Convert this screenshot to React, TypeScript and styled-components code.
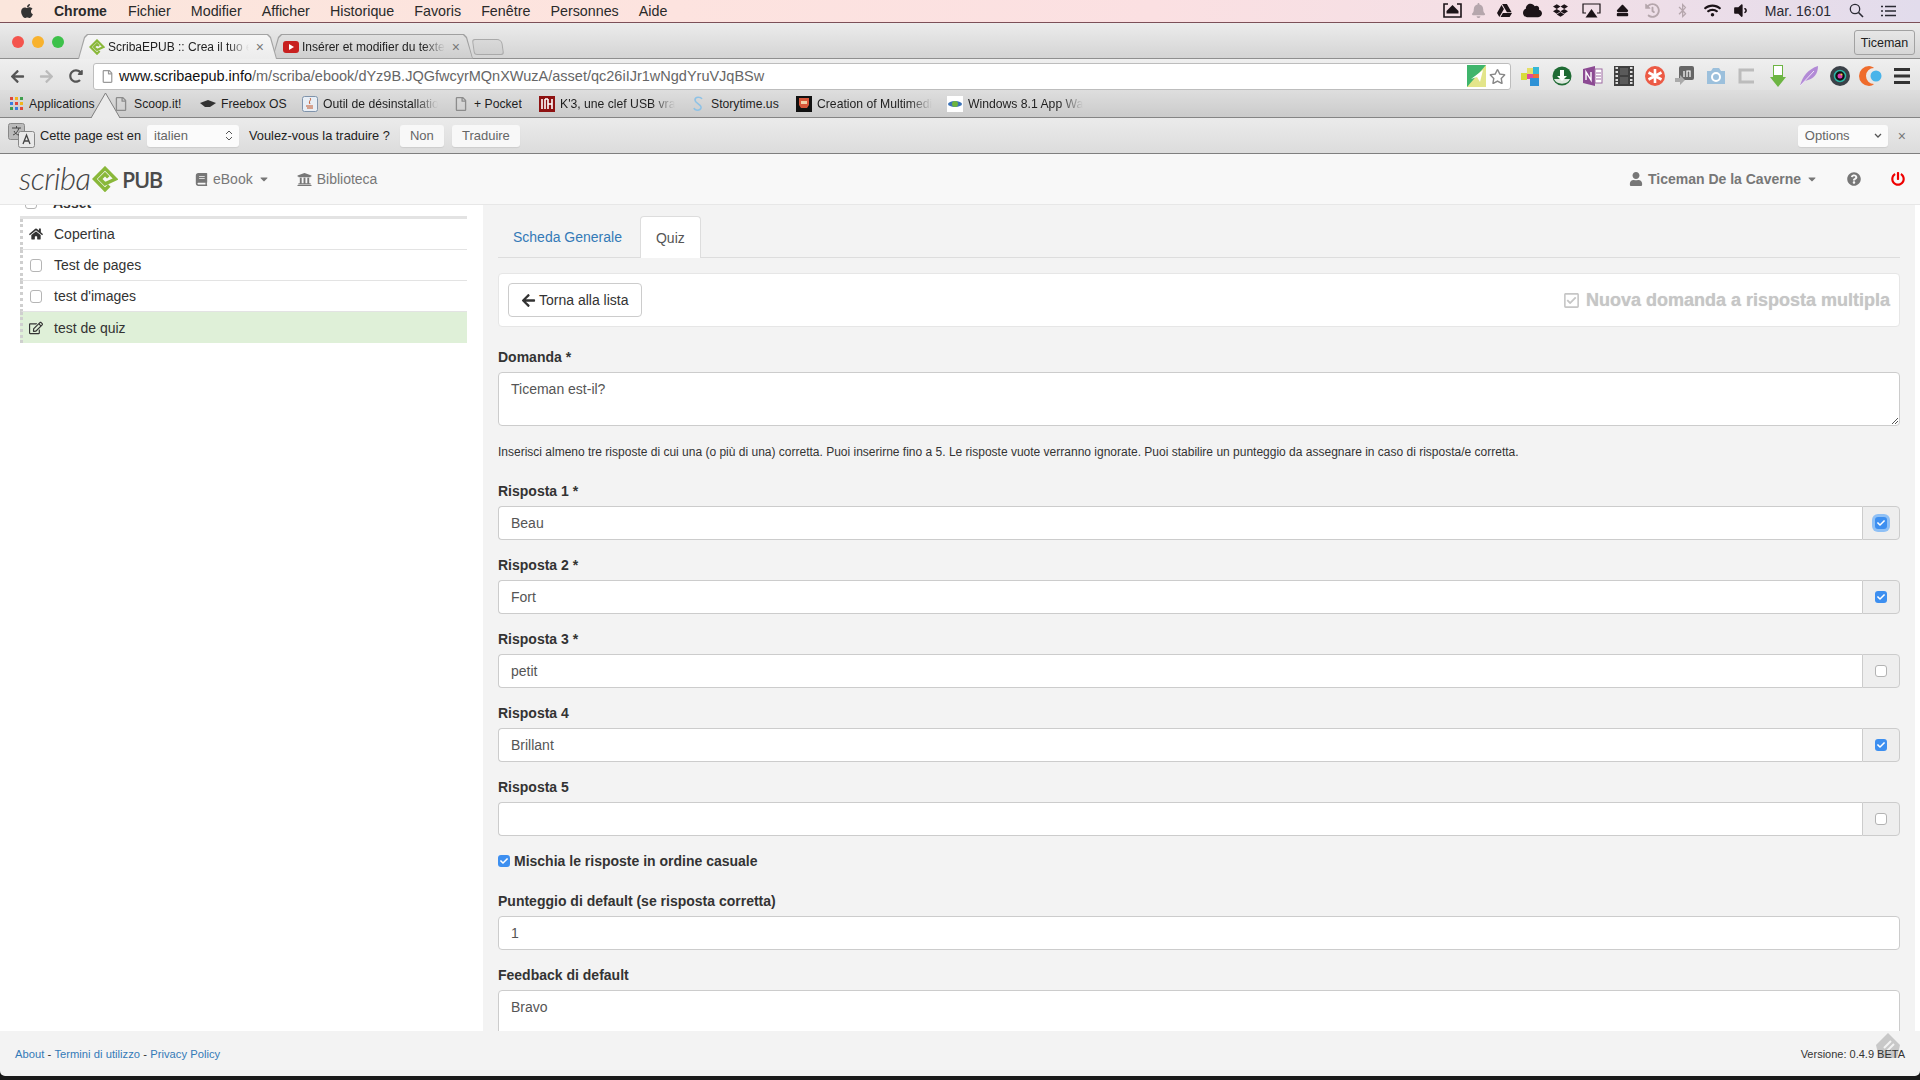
import React from "react";
import styled, { createGlobalStyle } from "styled-components";
import {
  FaApple,
  FaArrowLeft,
  FaArrowRight,
  FaBell,
  FaBluetoothB,
  FaBook,
  FaCaretDown,
  FaCheck,
  FaCloud,
  FaDropbox,
  FaEject,
  FaGoogleDrive,
  FaHistory,
  FaHome,
  FaPowerOff,
  FaQuestionCircle,
  FaRedoAlt,
  FaRegCheckSquare,
  FaRegEdit,
  FaRegFile,
  FaRegStar,
  FaUniversity,
  FaUser,
  FaVolumeDown,
  FaWifi,
} from "react-icons/fa";

const GlobalStyle = createGlobalStyle`
  * { box-sizing: border-box; }
  html, body { margin: 0; padding: 0; height: 100%; overflow: hidden; }
  body {
    font-family: "Liberation Sans", Arial, sans-serif;
    font-size: 14px;
    color: #333;
    background: #141414;
  }
`;

const Page = styled.div`
  width: 1920px;
  height: 1080px;
  display: flex;
  flex-direction: column;
  overflow: hidden;
`;

/* mac menu bar */
const MenuBar = styled.div`
  height: 23px;
  flex: none;
  display: flex;
  align-items: center;
  padding: 0 24px 1px 19px;
  background: linear-gradient(90deg, #fbe6dc 0%, #fde3df 35%, #fbe0e2 60%, #f3dfe6 80%, #e2dcec 100%);
  border-bottom: 1px solid #7c5058;
  color: #2a2a2a;
`;
const AppleSlot = styled.div`
  width: 35px;
  display: flex;
  font-size: 16px;
  color: #333;
`;
const MenuItem = styled.span<{ $bold?: boolean }>`
  font-size: ${(p) => (p.$bold ? "14px" : "14.3px")};
  margin-right: ${(p) => (p.$bold ? "21px" : "20px")};
  font-weight: ${(p) => (p.$bold ? 700 : 400)};
`;
const MenuRight = styled.div`
  margin-left: auto;
  display: flex;
  align-items: center;
`;
const StatusSlot = styled.div<{ $dim?: boolean; $w: number }>`
  width: ${(p) => p.$w}px;
  display: flex;
  justify-content: center;
  align-items: center;
  font-size: 15px;
  color: ${(p) => (p.$dim ? "#b5a6ac" : "#1c1418")};
`;
const Clock = styled.span`
  font-size: 14px;
  margin: 0 18px 0 12px;
  white-space: nowrap;
  color: #2a2a33;
`;
const MenuGlyph = styled.svg`
  flex: none;
  margin-right: 17px;
  &:last-child { margin-right: 0; }
`;

/* chrome */
const TabStrip = styled.div`
  height: 36px;
  flex: none;
  display: flex;
  align-items: flex-end;
  padding: 0 5px 0 0;
  background: linear-gradient(#ececec, #d4d4d4);
  border-bottom: 1px solid #8f8f8f;
`;
const Lights = styled.div`
  width: 78px;
  flex: none;
  display: flex;
  gap: 8px;
  padding: 0 0 10px 12px;
  align-self: flex-end;
`;
const Light = styled.div<{ $c: string }>`
  width: 12px;
  height: 12px;
  border-radius: 50%;
  background: ${(p) => p.$c};
`;
const Tab = styled.div<{ $active?: boolean; $w: number }>`
  position: relative;
  width: ${(p) => p.$w}px;
  height: 25px;
  margin-bottom: -1px;
  margin-right: -5px;
  flex: none;
  display: flex;
  align-items: center;
  padding: 0 13px 0 11px;
  background: ${(p) => (p.$active ? "#a4a4a4" : "#a0a0a0")};
  clip-path: polygon(0 100%, 6px 3px, 9px 0, calc(100% - 9px) 0, calc(100% - 6px) 3px, 100% 100%);
  z-index: ${(p) => (p.$active ? 2 : 1)};
  &::before {
    content: "";
    position: absolute;
    inset: 1px 1px ${(p) => (p.$active ? "0" : "1px")} 1px;
    background: ${(p) => (p.$active ? "linear-gradient(#f6f6f6, #ececec)" : "linear-gradient(#e0e0e0, #cfcfcf)")};
    clip-path: polygon(0 100%, 6px 3px, 9px 0, calc(100% - 9px) 0, calc(100% - 6px) 3px, 100% 100%);
  }
`;
const TabInner = styled.div`
  position: relative;
  display: flex;
  align-items: center;
  width: 100%;
  gap: 3px;
`;
const TabTitle = styled.span`
  flex: 1;
  min-width: 0;
  font-size: 12px;
  color: #222;
  white-space: nowrap;
  overflow: hidden;
  -webkit-mask-image: linear-gradient(90deg, #000 85%, transparent 100%);
  mask-image: linear-gradient(90deg, #000 85%, transparent 100%);
`;
const TabClose = styled.span`
  font-size: 14px;
  color: #777;
  margin-left: 4px;
`;
const NewTab = styled.div`
  width: 30px;
  height: 16px;
  margin: 0 0 3px 5px;
  flex: none;
  border: 1px solid #a9a9a9;
  border-radius: 3px 5px 3px 3px;
  background: linear-gradient(#d9d9d9, #cfcfcf);
  transform: skewX(8deg);
`;
const ProfileBtn = styled.div`
  margin: 0 0 3px auto;
  width: 61px;
  height: 25px;
  display: flex;
  align-items: center;
  justify-content: center;
  font-size: 12.5px;
  color: #222;
  border: 1px solid #a2a2a2;
  border-radius: 3px;
`;

const Toolbar = styled.div`
  height: 31px;
  flex: none;
  display: flex;
  align-items: center;
  padding-top: 3px;
  background: linear-gradient(#efefef, #e2e2e2);
`;
const NavGlyph = styled.div<{ $c: string }>`
  width: 29px;
  display: flex;
  justify-content: center;
  font-size: 15px;
  color: ${(p) => p.$c};
`;
const NavGroup = styled.div`
  width: 93px;
  flex: none;
  display: flex;
  padding-left: 3px;
`;
const UrlBox = styled.div`
  width: 1418px;
  height: 27px;
  flex: none;
  display: flex;
  align-items: center;
  padding: 0 4px 0 7px;
  background: #fff;
  border: 1px solid #bdbdbd;
  border-radius: 3px;
`;
const UrlText = styled.div`
  margin-left: 5px;
  font-size: 14.5px;
  color: #666;
  white-space: nowrap;
  b {
    font-weight: 400;
    color: #111;
  }
`;
const UrlEnd = styled.div`
  margin-left: auto;
  display: flex;
  align-items: center;
  gap: 3px;
  font-size: 17px;
  color: #888;
`;
const Extensions = styled.div`
  flex: 1;
  display: flex;
  align-items: center;
  padding-left: 4.5px;
`;
const Ext = styled.div`
  width: 30.9px;
  display: flex;
  justify-content: center;
`;

const Bookmarks = styled.div`
  position: relative;
  height: 28px;
  flex: none;
  display: flex;
  align-items: center;
  padding-left: 8px;
  background: linear-gradient(#dedede, #cbcbcb);
  border-bottom: 1px solid #858585;
`;
const Bookmark = styled.div<{ $w: number }>`
  width: ${(p) => p.$w}px;
  flex: none;
  display: flex;
  align-items: center;
  gap: 5px;
`;
const BookmarkIcon = styled.div`
  width: 16px;
  height: 16px;
  flex: none;
  display: flex;
  align-items: center;
  justify-content: center;
  font-size: 14px;
  color: #8c8c8c;
`;
const BookmarkText = styled.span<{ $fade?: boolean }>`
  font-size: 12.2px;
  color: #1f1f1f;
  white-space: nowrap;
  overflow: hidden;
  max-width: 115px;
  ${(p) =>
    p.$fade
      ? `-webkit-mask-image: linear-gradient(90deg, #000 80%, transparent 100%);
         mask-image: linear-gradient(90deg, #000 80%, transparent 100%);`
      : ""}
`;
const BubbleArrow = styled.svg`
  position: absolute;
  left: 91px;
  top: 3px;
`;

const TranslateBar = styled.div`
  height: 36px;
  flex: none;
  display: flex;
  align-items: center;
  padding: 0 14px 0 8px;
  font-size: 12.8px;
  color: #222;
  background: linear-gradient(#ebebeb, #dcdcdc);
  border-bottom: 1px solid #7f7f7f;
`;
const TranslateIcon = styled.svg`
  flex: none;
  margin-right: 5px;
`;
const TranslateLabel = styled.span<{ $ml?: number; $mr?: number }>`
  margin-left: ${(p) => p.$ml ?? 0}px;
  margin-right: ${(p) => p.$mr ?? 6}px;
  white-space: nowrap;
`;
const TranslateSelect = styled.div<{ $w: number; $push?: boolean }>`
  width: ${(p) => p.$w}px;
  height: 22px;
  flex: none;
  display: flex;
  align-items: center;
  justify-content: space-between;
  padding: 0 6px 0 7px;
  margin-left: ${(p) => (p.$push ? "auto" : "0")};
  background: #fbfbfb;
  border-radius: 3px;
  color: #666;
  font-size: 13px;
  box-shadow: 0 1px 1px rgba(0, 0, 0, 0.08);
`;
const TranslateBtn = styled.div<{ $w: number; $ml?: number }>`
  width: ${(p) => p.$w}px;
  height: 22px;
  flex: none;
  display: flex;
  align-items: center;
  justify-content: center;
  margin-left: ${(p) => p.$ml ?? 0}px;
  background: #f8f8f8;
  border-radius: 3px;
  color: #666;
  font-size: 13px;
  box-shadow: 0 1px 1px rgba(0, 0, 0, 0.08);
`;
const TranslateClose = styled.span`
  margin-left: 10px;
  color: #777;
  font-size: 14px;
`;

/* app navbar */
const Navbar = styled.div`
  height: 51px;
  flex: none;
  display: flex;
  align-items: center;
  padding: 0 15px 0 19px;
  background: #f8f8f8;
  border-bottom: 1px solid #e7e7e7;
`;
const Logo = styled.div`
  width: 176px;
  flex: none;
  display: flex;
  align-items: center;
`;
const LogoScript = styled.span`
  font-family: "Lato", sans-serif;
  font-style: italic;
  font-weight: 300;
  font-size: 31px;
  line-height: 34px;
  letter-spacing: -0.5px;
  color: #444;
  width: 73px;
  margin-top: -3px;
`;
const LogoPub = styled.span`
  font-family: "Open Sans", sans-serif;
  font-weight: 600;
  font-size: 22px;
  letter-spacing: -1.5px;
  color: #4b4b4b;
  margin-left: 4px;
`;
const NavLink = styled.div<{ $strong?: boolean; $mr?: number }>`
  display: flex;
  align-items: center;
  gap: 5px;
  font-size: 14px;
  color: #777;
  font-weight: ${(p) => (p.$strong ? 700 : 400)};
  margin-right: ${(p) => p.$mr ?? 27}px;
  svg { flex: none; }
`;
const NavRight = styled.div`
  margin-left: auto;
  display: flex;
  align-items: center;
`;
const NavIcon = styled.div<{ $c: string; $mr: number }>`
  display: flex;
  font-size: 14px;
  color: ${(p) => p.$c};
  margin-right: ${(p) => p.$mr}px;
`;

const Main = styled.div`
  height: 826px;
  flex: none;
  display: flex;
  overflow: hidden;
  background: #fff;
`;
const Sidebar = styled.div`
  width: 483px;
  flex: none;
  padding: 0 16px 0 20px;
  background: #fff;
`;
/* list is scrolled: only the foot of the "Asset" head shows under the navbar */
const SideHead = styled.div`
  height: 14px;
  overflow: hidden;
  font-weight: 700;
  border-bottom: 3px solid #e3e3e3;
`;
const SideHeadInner = styled.div`
  display: flex;
  align-items: center;
  gap: 16px;
  height: 21px;
  margin-top: -13px;
  padding-left: 5px;
`;
const SideRow = styled.div<{ $active?: boolean }>`
  height: 31px;
  display: flex;
  align-items: center;
  gap: 11px;
  padding-left: 6px;
  font-size: 14px;
  color: #333;
  border-bottom: ${(p) => (p.$active ? "0" : "1px solid #e3e3e3")};
  border-left: 3px dotted #cfcfcf;
  background: ${(p) => (p.$active ? "#dff0d8" : "#fff")};
`;
const RowIcon = styled.div`
  width: 14px;
  flex: none;
  display: flex;
  justify-content: center;
  font-size: 14px;
  color: #333;
`;
const RoundBox = styled.div`
  width: 12px;
  height: 13px;
  flex: none;
  border: 1px solid #b5b5b5;
  border-radius: 3px;
  background: #fff;
`;

const Content = styled.div`
  flex: 1;
  min-width: 0;
  background: #f3f3f3;
  padding: 11px 15px 0 15px;
`;
const Gutter = styled.div`
  width: 5px;
  flex: none;
  background: #fff;
`;
const Tabs = styled.div`
  height: 42px;
  display: flex;
  align-items: stretch;
  border-bottom: 1px solid #ddd;
`;
const PageTab = styled.div<{ $active?: boolean }>`
  display: flex;
  align-items: center;
  padding: 0 ${(p) => (p.$active ? "15px" : "14px")};
  font-size: 14px;
  margin-right: 3px;
  height: ${(p) => (p.$active ? "42px" : "41px")};
  color: ${(p) => (p.$active ? "#555" : "#337ab7")};
  background: ${(p) => (p.$active ? "#fff" : "transparent")};
  border: 1px solid ${(p) => (p.$active ? "#ddd" : "transparent")};
  border-bottom: 0;
  border-radius: 4px 4px 0 0;
`;
const Panel = styled.div`
  height: 54px;
  margin: 15px 0 20px;
  display: flex;
  align-items: center;
  justify-content: space-between;
  padding: 0 9px;
  background: #fff;
  border: 1px solid #e6e6e6;
  border-radius: 4px;
`;
const BackBtn = styled.div`
  height: 34px;
  display: flex;
  align-items: center;
  gap: 3px;
  padding: 0 12px;
  font-size: 14px;
  color: #333;
  background: #fff;
  border: 1px solid #ccc;
  border-radius: 4px;
`;
const PanelTitle = styled.div`
  display: flex;
  align-items: center;
  gap: 6px;
  font-size: 18px;
  font-weight: 700;
  color: #c6c6c6;
  text-shadow: 0 0 1px #d6d6d6;
`;
const FieldLabel = styled.div`
  font-size: 14px;
  font-weight: 700;
  line-height: 20px;
  color: #333;
  margin-bottom: 5px;
`;
const Field = styled.div`
  margin-bottom: 15px;
`;
const Input = styled.div`
  height: 34px;
  display: flex;
  align-items: center;
  padding: 0 12px;
  font-size: 14px;
  color: #555;
  background: #fff;
  border: 1px solid #ccc;
  border-radius: 4px;
`;
const TextArea = styled.div<{ $h: number }>`
  position: relative;
  height: ${(p) => p.$h}px;
  padding: 6px 12px;
  font-size: 14px;
  line-height: 20px;
  color: #555;
  background: #fff;
  border: 1px solid #ccc;
  border-radius: 4px;
`;
const ResizeGrip = styled.svg`
  position: absolute;
  right: 0;
  bottom: 0;
`;
const Help = styled.p`
  margin: 0 0 20px;
  padding-top: 3px;
  font-size: 12px;
  line-height: 17px;
  color: #333;
`;
const InputGroup = styled.div`
  display: flex;
  height: 34px;
`;
const GroupInput = styled(Input)`
  flex: 1;
  border-radius: 4px 0 0 4px;
  border-right: 0;
`;
const Addon = styled.div`
  width: 38px;
  flex: none;
  display: flex;
  align-items: center;
  justify-content: center;
  background: #eee;
  border: 1px solid #ccc;
  border-radius: 0 4px 4px 0;
`;
const Check = styled.div<{ $on?: boolean; $glow?: boolean }>`
  width: 12px;
  height: 12px;
  flex: none;
  display: flex;
  align-items: center;
  justify-content: center;
  font-size: 8px;
  color: #fff;
  border-radius: 3px;
  background: ${(p) => (p.$on ? "#3d8ff0" : "#fff")};
  border: ${(p) => (p.$on ? "0" : "1px solid #b3b3b3")};
  box-shadow: ${(p) => (p.$glow ? "0 0 0 3px #8fc0f5" : "none")};
`;
const CheckLine = styled.div`
  display: flex;
  align-items: center;
  gap: 4px;
  height: 20px;
  margin: 0 0 20px;
  font-size: 14px;
  font-weight: 700;
  color: #333;
`;

const Footer = styled.div`
  position: relative;
  height: 45px;
  flex: none;
  display: flex;
  align-items: center;
  justify-content: space-between;
  padding: 0 15px;
  font-size: 11.2px;
  color: #333;
  background: #f3f3f3;
  border-radius: 0 0 5px 5px;
  span {
    position: relative;
    z-index: 1;
  }
  a {
    color: #337ab7;
    text-decoration: none;
  }
`;
const FooterLinks = styled.span`
  word-spacing: 0.2px;
`;
const VersionText = styled.span`
  font-size: 11px;
`;
const FooterMark = styled.svg`
  position: absolute;
  right: 20px;
  top: 2px;
`;
const Desktop = styled.div`
  flex: 1;
  background: #1a1a1a;
`;

const AppsIcon = () => (
  <svg width="13" height="13" viewBox="0 0 13 13">
    {[0, 1, 2].flatMap((r) =>
      [0, 1, 2].map((c) => (
        <rect
          key={`${r}${c}`}
          x={c * 5}
          y={r * 5}
          width="3"
          height="3"
          fill={["#e0473a", "#f1b51c", "#3f9e4d", "#3b7de0", "#e0473a", "#f1b51c", "#3f9e4d", "#3b7de0", "#e0473a"][r * 3 + c]}
        />
      ))
    )}
  </svg>
);

const ScribaMark = ({ size }: { size: number }) => (
  <svg width={size} height={size} viewBox="0 0 24 24" fill="none">
    <path
      d="M16 18 L12 22 L2.2 12 L12 2.2 L21.800 12 L12 16.500 L7.500 12 L12 7.500 L15 10.500"
      stroke="#8ab83a"
      strokeWidth="3.2"
      strokeLinejoin="miter"
    />
  </svg>
);

const ExtIcons = [
  <svg key="a" width="20" height="20" viewBox="0 0 20 20">
    <rect x="0" y="7" width="6" height="7" fill="#d8dc3a" />
    <rect x="6" y="2" width="6" height="6" fill="#e5e066" />
    <rect x="12" y="1" width="6" height="7" fill="#35b8d6" />
    <rect x="6" y="8" width="6" height="5" fill="#e0489a" />
    <rect x="12" y="8" width="6" height="4" fill="#e8703a" />
    <rect x="9" y="12" width="9" height="8" fill="#2f92d6" />
  </svg>,
  <svg key="b" width="20" height="20" viewBox="0 0 20 20">
    <circle cx="10" cy="10" r="9.5" fill="#1f6b34" />
    <path d="M2 13a8.5 7 0 0 0 16 0" fill="#dfe8df" />
    <path d="M8 4h4v6h3l-5 5-5-5h3z" fill="#fff" />
  </svg>,
  <svg key="c" width="20" height="20" viewBox="0 0 20 20">
    <path d="M0 3l12-3v20L0 17z" fill="#8c4a93" />
    <rect x="12" y="3" width="7" height="14" fill="#fff" stroke="#9d6aa2" />
    <path d="M13 7h5M13 10h5M13 13h5" stroke="#9d6aa2" />
    <path d="M3 14V6l5 8V6" stroke="#fff" strokeWidth="1.4" fill="none" />
  </svg>,
  <svg key="d" width="20" height="20" viewBox="0 0 20 20">
    <rect width="20" height="20" fill="#3f3f3f" />
    <rect x="6" y="2" width="8" height="7" fill="#5a5a5a" />
    <rect x="6" y="11" width="8" height="7" fill="#5a5a5a" />
    {[1, 5, 9, 13, 16].flatMap((y) => [
      <rect key={`l${y}`} x="1.5" y={y} width="2.5" height="2" fill="#ddd" />,
      <rect key={`r${y}`} x="16" y={y} width="2.5" height="2" fill="#ddd" />,
    ])}
  </svg>,
  <svg key="e" width="20" height="20" viewBox="0 0 20 20">
    <circle cx="10" cy="10" r="10" fill="#ec5a45" />
    <path d="M10 3v14M3.5 6.5l13 7M16.5 6.5l-13 7" stroke="#fff" strokeWidth="2.6" />
  </svg>,
  <svg key="f" width="20" height="20" viewBox="0 0 20 20">
    <rect x="4" y="0" width="15" height="14" rx="2" fill="#666" />
    <path d="M9 5v6M12 11V5h3v6" stroke="#fff" strokeWidth="1.2" fill="none" />
    <path d="M0 12h5v-3l5 5-5 5v-3H0z" fill="#aaa" />
  </svg>,
  <svg key="g" width="20" height="20" viewBox="0 0 20 20">
    <path d="M1 5h4l2-3h6l2 3h4v13H1z" fill="#9cc0dc" />
    <circle cx="10" cy="11" r="4" fill="none" stroke="#fff" strokeWidth="2" />
  </svg>,
  <svg key="h" width="18" height="16" viewBox="0 0 18 16">
    <path d="M16 2H2v12h14" fill="none" stroke="#bcbcbc" strokeWidth="3" />
  </svg>,
  <svg key="i" width="16" height="22" viewBox="0 0 16 22">
    <path d="M3 0h10v12h3l-8 10-8-10h3z" fill="#6db543" />
    <rect x="4" y="1" width="8" height="9" fill="#fff" />
  </svg>,
  <svg key="j" width="20" height="22" viewBox="0 0 20 22">
    <path d="M1 21C3 12 9 4 19 1c0 8-4 13-13 15z" fill="#b28ad6" />
    <path d="M1 21L15 6" stroke="#f0e6f8" />
  </svg>,
  <svg key="k" width="20" height="20" viewBox="0 0 20 20">
    <circle cx="10" cy="10" r="10" fill="#3b4148" />
    <circle cx="10" cy="10" r="5.5" fill="#111" stroke="#2bb5a5" strokeWidth="1.5" />
    <circle cx="10" cy="10" r="2.5" fill="#d83bb0" />
    <circle cx="11.5" cy="8.5" r="1" fill="#e7d33a" />
  </svg>,
  <svg key="l" width="24" height="20" viewBox="0 0 24 20">
    <path d="M10 0a10 10 0 1 0 0 20c2 0 4-1 5-2a7 7 0 0 1 0-16c-1-1-3-2-5-2z" fill="#ef6c2c" />
    <circle cx="17" cy="10" r="5.5" fill="#48b4ea" />
  </svg>,
  <svg key="m" width="16" height="16" viewBox="0 0 16 16">
    <path d="M0 1.5h16M0 8h16M0 14.500h16" stroke="#333" strokeWidth="3" />
  </svg>,
];

const answers = [
  { label: "Risposta 1 *", value: "Beau", on: true, glow: true },
  { label: "Risposta 2 *", value: "Fort", on: true },
  { label: "Risposta 3 *", value: "petit", on: false },
  { label: "Risposta 4", value: "Brillant", on: true },
  { label: "Risposta 5", value: "", on: false },
];

export default function App() {
  return (
    <Page>
      <GlobalStyle />
      <MenuBar>
        <AppleSlot>
          <FaApple />
        </AppleSlot>
        <MenuItem $bold>Chrome</MenuItem>
        <MenuItem>Fichier</MenuItem>
        <MenuItem>Modifier</MenuItem>
        <MenuItem>Afficher</MenuItem>
        <MenuItem>Historique</MenuItem>
        <MenuItem>Favoris</MenuItem>
        <MenuItem>Fenêtre</MenuItem>
        <MenuItem>Personnes</MenuItem>
        <MenuItem>Aide</MenuItem>
        <MenuRight>
          <StatusSlot $w={28}>
            <svg width="19" height="15" viewBox="0 0 19 15">
              <path d="M5 1H1v13h17V1h-4" fill="none" stroke="#1c1418" strokeWidth="1.6" />
              <path d="M9.500 2l6 6h-12z" fill="#1c1418" />
              <rect x="3.500" y="8" width="12" height="2.500" fill="#1c1418" />
            </svg>
          </StatusSlot>
          <StatusSlot $dim $w={24}>
            <FaBell />
          </StatusSlot>
          <StatusSlot $w={28}>
            <FaGoogleDrive />
          </StatusSlot>
          <StatusSlot $w={28}>
            <FaCloud size={19} />
          </StatusSlot>
          <StatusSlot $w={28}>
            <FaDropbox />
          </StatusSlot>
          <StatusSlot $w={34}>
            <svg width="19" height="15" viewBox="0 0 19 15">
              <path d="M4 10H1V1h17v9h-3" fill="none" stroke="#1c1418" strokeWidth="1.2" />
              <path d="M9.500 6l6 8.500h-12z" fill="#1c1418" />
            </svg>
          </StatusSlot>
          <StatusSlot $w={28}>
            <FaEject size={13} />
          </StatusSlot>
          <StatusSlot $dim $w={32}>
            <FaHistory />
          </StatusSlot>
          <StatusSlot $dim $w={28}>
            <FaBluetoothB />
          </StatusSlot>
          <StatusSlot $w={32}>
            <FaWifi size={17} />
          </StatusSlot>
          <StatusSlot $w={24}>
            <FaVolumeDown size={17} />
          </StatusSlot>
          <Clock>Mar. 16:01</Clock>
          <MenuGlyph width="15" height="15" viewBox="0 0 15 15">
            <circle cx="6" cy="6" r="4.700" fill="none" stroke="#2a2a33" strokeWidth="1.300" />
            <path d="M9.500 9.500L14 14" stroke="#2a2a33" strokeWidth="1.600" />
          </MenuGlyph>
          <MenuGlyph width="15" height="12" viewBox="0 0 15 12">
            <path d="M0 1.500h2M4 1.500h11M0 6h2M4 6h11M0 10.500h2M4 10.500h11" stroke="#2a2a33" strokeWidth="1.500" />
          </MenuGlyph>
        </MenuRight>
      </MenuBar>

      <TabStrip>
        <Lights>
          <Light $c="#f4544d" />
          <Light $c="#f8b22e" />
          <Light $c="#3dc14a" />
        </Lights>
        <Tab $active $w={199}>
          <TabInner>
            <ScribaMark size={16} />
            <TabTitle>ScribaEPUB :: Crea il tuo e</TabTitle>
            <TabClose>×</TabClose>
          </TabInner>
        </Tab>
        <Tab $w={201}>
          <TabInner>
            <svg width="16" height="12" viewBox="0 0 16 12">
              <rect width="16" height="12" rx="3" fill="#c8201f" />
              <path d="M6 3l5 3-5 3z" fill="#fff" />
            </svg>
            <TabTitle>Insérer et modifier du texte</TabTitle>
            <TabClose>×</TabClose>
          </TabInner>
        </Tab>
        <NewTab />
        <ProfileBtn>Ticeman</ProfileBtn>
      </TabStrip>

      <Toolbar>
        <NavGroup>
          <NavGlyph $c="#555">
            <FaArrowLeft />
          </NavGlyph>
          <NavGlyph $c="#bbb">
            <FaArrowRight />
          </NavGlyph>
          <NavGlyph $c="#555">
            <FaRedoAlt size={14} />
          </NavGlyph>
        </NavGroup>
        <UrlBox>
          <FaRegFile color="#999" size={13} />
          <UrlText>
            <b>www.scribaepub.info</b>/m/scriba/ebook/dYz9B.JQGfwcyrMQnXWuzA/asset/qc26iIJr1wNgdYruVJqBSw
          </UrlText>
          <UrlEnd>
            <svg width="19" height="22" viewBox="0 0 19 22">
              <rect width="19" height="22" fill="#e3e58a" />
              <path d="M0 0h19L0 22z" fill="#3fb56c" />
              <path d="M4 14L16 5l-3 12-3-5z" fill="#fff" />
            </svg>
            <FaRegStar />
          </UrlEnd>
        </UrlBox>
        <Extensions>
          {ExtIcons.map((icon, i) => (
            <Ext key={i}>{icon}</Ext>
          ))}
        </Extensions>
      </Toolbar>

      <Bookmarks>
        <Bookmark $w={105}>
          <BookmarkIcon>
            <AppsIcon />
          </BookmarkIcon>
          <BookmarkText>Applications</BookmarkText>
        </Bookmark>
        <Bookmark $w={87}>
          <BookmarkIcon>
            <FaRegFile />
          </BookmarkIcon>
          <BookmarkText>Scoop.it!</BookmarkText>
        </Bookmark>
        <Bookmark $w={102}>
          <BookmarkIcon>
            <svg width="16" height="8" viewBox="0 0 16 8">
              <path d="M0 3l8-3 8 3-6 4H5z" fill="#333" />
            </svg>
          </BookmarkIcon>
          <BookmarkText>Freebox OS</BookmarkText>
        </Bookmark>
        <Bookmark $w={151}>
          <BookmarkIcon>
            <svg width="16" height="16" viewBox="0 0 16 16">
              <rect x="0.500" y="0.500" width="15" height="15" rx="2" fill="#e8eef5" stroke="#7f93ab" />
              <path d="M8 2c2 2-2 3 0 6M4 10h7M5 12h6" stroke="#c2562a" fill="none" />
            </svg>
          </BookmarkIcon>
          <BookmarkText $fade>Outil de désinstallation</BookmarkText>
        </Bookmark>
        <Bookmark $w={86}>
          <BookmarkIcon>
            <FaRegFile />
          </BookmarkIcon>
          <BookmarkText>+ Pocket</BookmarkText>
        </Bookmark>
        <Bookmark $w={151}>
          <BookmarkIcon>
            <svg width="16" height="16" viewBox="0 0 16 16">
              <rect width="16" height="16" fill="#8e1212" />
              <path d="M3 3v10M6 3v10h0M9 3v10M13 3v10M6 3h3M9 8h4" stroke="#fff" strokeWidth="1.600" fill="none" />
            </svg>
          </BookmarkIcon>
          <BookmarkText $fade>K'3, une clef USB vraiment</BookmarkText>
        </Bookmark>
        <Bookmark $w={106}>
          <BookmarkIcon>
            <svg width="12" height="16" viewBox="0 0 12 16">
              <path d="M10 3C9 1 3 0 3 4c0 4 7 4 6 8-1 3-6 3-7 0" fill="none" stroke="#8ec2e6" strokeWidth="1.600" />
            </svg>
          </BookmarkIcon>
          <BookmarkText>Storytime.us</BookmarkText>
        </Bookmark>
        <Bookmark $w={151}>
          <BookmarkIcon>
            <svg width="16" height="16" viewBox="0 0 16 16">
              <rect width="16" height="16" fill="#111" />
              <path d="M3 2h10v7l-2 3H5L3 9z" fill="#d8573a" />
              <rect x="5" y="5" width="6" height="3" fill="#f2d0a8" />
            </svg>
          </BookmarkIcon>
          <BookmarkText $fade>Creation of Multimedia</BookmarkText>
        </Bookmark>
        <Bookmark $w={151}>
          <BookmarkIcon>
            <svg width="16" height="16" viewBox="0 0 16 16">
              <rect width="16" height="16" fill="#fff" />
              <ellipse cx="8" cy="8" rx="7" ry="3" fill="#3c73b8" />
              <circle cx="8" cy="8" r="3" fill="#6db33f" />
            </svg>
          </BookmarkIcon>
          <BookmarkText $fade>Windows 8.1 App Wallet</BookmarkText>
        </Bookmark>
        <BubbleArrow width="29" height="25" viewBox="0 0 29 25">
          <path d="M0 25L14.500 0 29 25z" fill="#ebebeb" />
          <path d="M0 25L14.500 0 29 25" fill="none" stroke="#7f7f7f" />
        </BubbleArrow>
      </Bookmarks>

      <TranslateBar>
        <TranslateIcon width="27" height="25" viewBox="0 0 27 25">
          <rect x="0.500" y="0.500" width="16" height="16" rx="2" fill="#bbb" stroke="#888" />
          <rect x="10.500" y="8.500" width="16" height="16" rx="2" fill="#e9e9e9" stroke="#888" />
          <path d="M4 5h9M8.500 3v2M5 12c3-1 5-4 6-7M6 8c1 2 3 4 5 4" stroke="#444" fill="none" />
          <path d="M15 21l3.500-9 3.500 9M16.200 18h4.600" stroke="#444" strokeWidth="1.300" fill="none" />
        </TranslateIcon>
        <TranslateLabel>Cette page est en</TranslateLabel>
        <TranslateSelect $w={92}>
          italien
          <svg width="8" height="13" viewBox="0 0 8 13">
            <path d="M1 5l3-3 3 3M1 8l3 3 3-3" fill="none" stroke="#555" />
          </svg>
        </TranslateSelect>
        <TranslateLabel $ml={10} $mr={10}>
          Voulez-vous la traduire ?
        </TranslateLabel>
        <TranslateBtn $w={44}>Non</TranslateBtn>
        <TranslateBtn $w={68} $ml={8}>
          Traduire
        </TranslateBtn>
        <TranslateSelect $w={90} $push>
          Options
          <svg width="8" height="6" viewBox="0 0 8 6">
            <path d="M1 1l3 3 3-3" fill="none" stroke="#555" strokeWidth="1.300" />
          </svg>
        </TranslateSelect>
        <TranslateClose>×</TranslateClose>
      </TranslateBar>

      <Navbar>
        <Logo>
          <LogoScript>scriba</LogoScript>
          <ScribaMark size={26} />
          <LogoPub>PUB</LogoPub>
        </Logo>
        <NavLink $mr={27}>
          <FaBook size={13} />
          eBook
          <FaCaretDown size={12} />
        </NavLink>
        <NavLink>
          <FaUniversity size={15} />
          Biblioteca
        </NavLink>
        <NavRight>
          <NavLink $strong $mr={29}>
            <FaUser size={14} />
            Ticeman De la Caverne
            <FaCaretDown size={12} />
          </NavLink>
          <NavIcon $c="#777" $mr={30}>
            <FaQuestionCircle />
          </NavIcon>
          <NavIcon $c="#e00" $mr={0}>
            <FaPowerOff />
          </NavIcon>
        </NavRight>
      </Navbar>

      <Main>
        <Sidebar>
          <SideHead>
            <SideHeadInner>
              <RoundBox />
              Asset
            </SideHeadInner>
          </SideHead>
          <SideRow>
            <RowIcon>
              <FaHome />
            </RowIcon>
            Copertina
          </SideRow>
          <SideRow>
            <RowIcon>
              <RoundBox />
            </RowIcon>
            Test de pages
          </SideRow>
          <SideRow>
            <RowIcon>
              <RoundBox />
            </RowIcon>
            test d'images
          </SideRow>
          <SideRow $active>
            <RowIcon>
              <FaRegEdit />
            </RowIcon>
            test de quiz
          </SideRow>
        </Sidebar>
        <Content>
          <Tabs>
            <PageTab>Scheda Generale</PageTab>
            <PageTab $active>Quiz</PageTab>
          </Tabs>
          <Panel>
            <BackBtn>
              <FaArrowLeft size={15} />
              Torna alla lista
            </BackBtn>
            <PanelTitle>
              <FaRegCheckSquare size={17} />
              Nuova domanda a risposta multipla
            </PanelTitle>
          </Panel>
          <Field>
            <FieldLabel>Domanda *</FieldLabel>
            <TextArea $h={54}>
              Ticeman est-il?
              <ResizeGrip width="9" height="9" viewBox="0 0 9 9">
                <path d="M8 2L2 8M8 5L5 8" stroke="#555" />
              </ResizeGrip>
            </TextArea>
          </Field>
          <Help>
            Inserisci almeno tre risposte di cui una (o più di una) corretta. Puoi inserirne fino a 5. Le risposte vuote
            verranno ignorate. Puoi stabilire un punteggio da assegnare in caso di risposta/e corretta.
          </Help>
          {answers.map((a) => (
            <Field key={a.label}>
              <FieldLabel>{a.label}</FieldLabel>
              <InputGroup>
                <GroupInput>{a.value}</GroupInput>
                <Addon>
                  <Check $on={a.on} $glow={a.glow}>
                    {a.on && <FaCheck />}
                  </Check>
                </Addon>
              </InputGroup>
            </Field>
          ))}
          <CheckLine>
            <Check $on>
              <FaCheck />
            </Check>
            Mischia le risposte in ordine casuale
          </CheckLine>
          <Field>
            <FieldLabel>Punteggio di default (se risposta corretta)</FieldLabel>
            <Input>1</Input>
          </Field>
          <Field>
            <FieldLabel>Feedback di default</FieldLabel>
            <TextArea $h={54}>Bravo</TextArea>
          </Field>
        </Content>
        <Gutter />
      </Main>

      <Footer>
        <FooterLinks>
          <a>About</a> - <a>Termini di utilizzo</a> - <a>Privacy Policy</a>
        </FooterLinks>
        <VersionText>Versione: 0.4.9 BETA</VersionText>
        <FooterMark width="24" height="26" viewBox="0 0 24 26">
          <path d="M12 0l12 12-3 13H3L0 12z" fill="#c8c8c8" />
          <path d="M8 15l7-7M11 18l7-7" stroke="#f3f3f3" strokeWidth="2" />
        </FooterMark>
      </Footer>
      <Desktop />
    </Page>
  );
}
